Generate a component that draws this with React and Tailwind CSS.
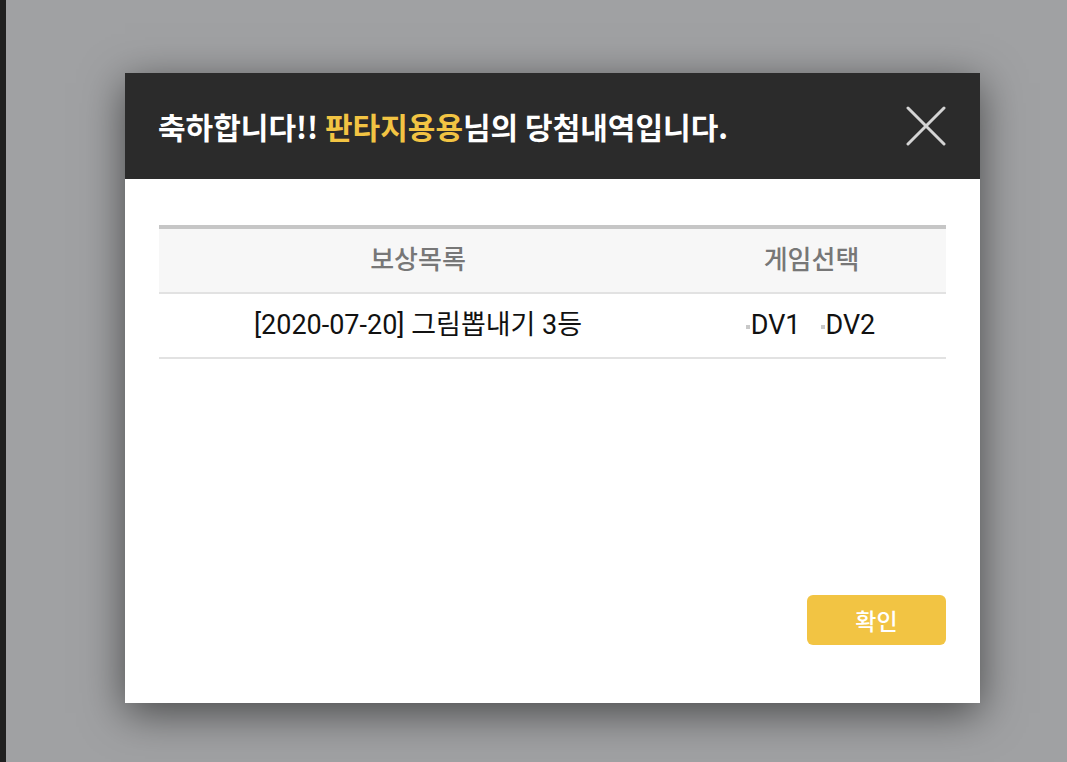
export default function App() {
  const font = { fontFamily: "Roboto, 'Noto Sans CJK KR', sans-serif" };
  return (
    <div className="w-[1067px] h-[762px] flex bg-[#a0a1a3] overflow-hidden" style={font}>
      <div className="w-[6px] h-full bg-[#202020] shrink-0" />
      <div className="flex-1 pl-[119px] pt-[73px]">
        <div className="w-[855px] h-[630px] bg-white flex flex-col shadow-[0_10px_40px_rgba(0,0,0,0.55)]">
          <div className="h-[106px] bg-[#2b2b2b] flex items-center justify-between pl-[33px] pr-[33px] shrink-0">
            <div className="text-[30px] font-bold text-white tracking-[0px]" style={{ fontFamily: "'Noto Sans CJK KR', sans-serif" }}>
              축하합니다!! <span className="text-[#f2c443]">판타지용용</span>님의 당첨내역입니다.
            </div>
            <svg width="40" height="40" viewBox="0 0 40 40" className="mr-[1px]">
              <path d="M2 2 L38 38 M38 2 L2 38" stroke="#d4d4d4" strokeWidth="3" strokeLinecap="round" />
            </svg>
          </div>
          <div className="flex-1 flex flex-col px-[34px] pt-[46px] pb-[58px]">
            <div className="border-t-[4px] border-[#c6c6c6]">
              <div className="flex h-[65px] bg-[#f7f7f7] border-b-2 border-[#e2e2e2] text-[#777] text-[26px] font-medium">
                <div className="w-[518px] flex items-center justify-center">보상목록</div>
                <div className="flex-1 flex items-center justify-center">게임선택</div>
              </div>
              <div className="flex h-[65px] border-b-2 border-[#e2e2e2] text-[27px] text-[#111]">
                <div className="w-[518px] flex items-center justify-center">[2020-07-20] 그림뽑내기 3등</div>
                <div className="flex-1 flex items-center justify-center gap-[20px] pr-[2px]">
                  <span className="flex items-center"><span className="w-[4px] h-[4px] bg-[#c8c8c8] mr-[1px] mt-[2px]" />DV1</span>
                  <span className="flex items-center"><span className="w-[4px] h-[4px] bg-[#c8c8c8] mr-[1px] mt-[2px]" />DV2</span>
                </div>
              </div>
            </div>
            <div className="flex-1" />
            <div className="flex justify-end">
              <button className="w-[139px] h-[50px] rounded-[6px] bg-[#f2c443] text-white text-[23px] font-medium" style={{ fontFamily: "'Noto Sans CJK KR', sans-serif" }}>확인</button>
            </div>
          </div>
        </div>
      </div>
    </div>
  );
}
